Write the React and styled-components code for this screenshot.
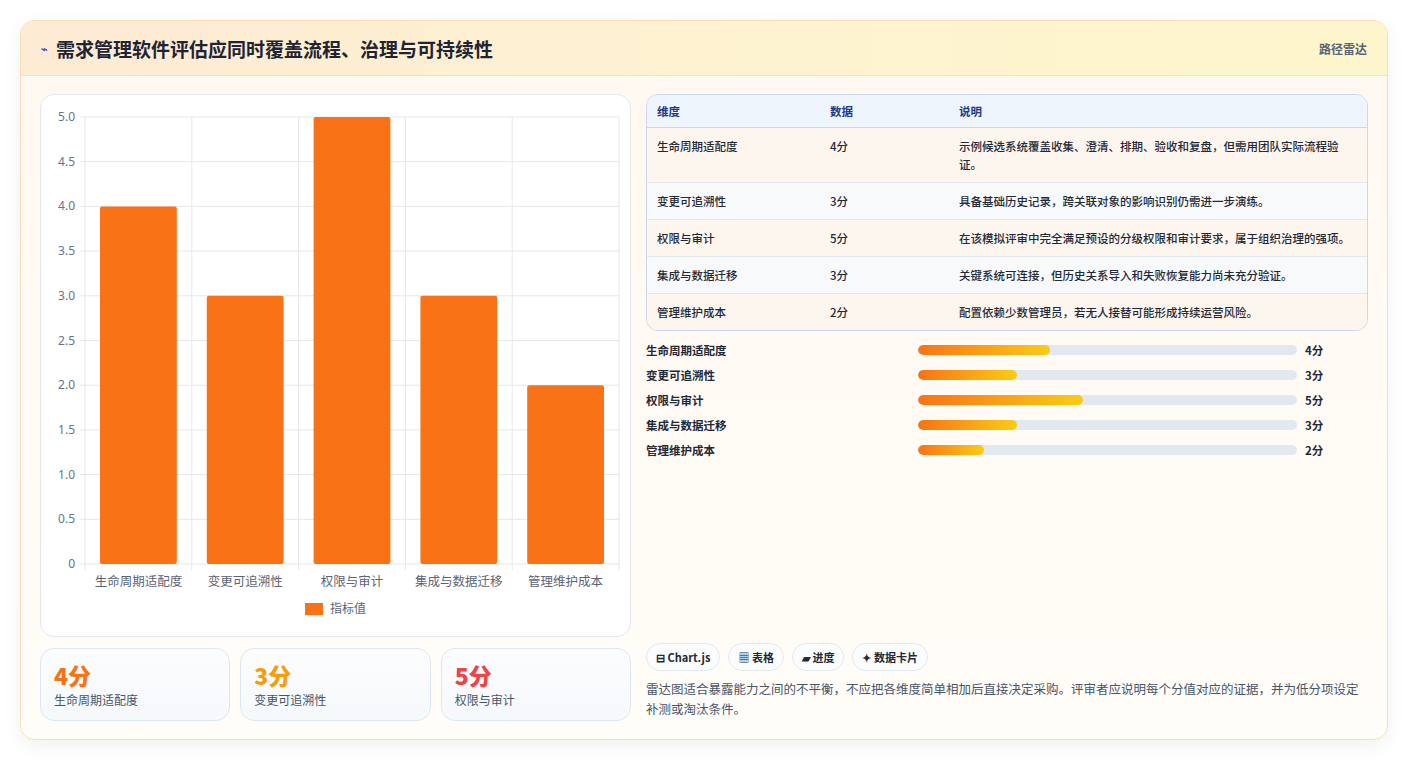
import React from "react";
import styled, { createGlobalStyle } from "styled-components";

const Global = createGlobalStyle`
  html,body{margin:0;padding:0;background:#fff;}
  body{font-family:"Noto Sans CJK SC","Noto Sans",sans-serif;color:#1f2937;}
`;
const Page = styled.div`padding:20px 20px;height:760px;box-sizing:border-box;`;
const Card = styled.div`
  border:1px solid #f7dfb8;border-radius:14px;overflow:hidden;height:720px;box-sizing:border-box;
  background:linear-gradient(180deg,#fff8f0,#fffdf8);box-shadow:0 6px 20px rgba(0,0,0,0.06);
  display:flex;flex-direction:column;
`;
const Header = styled.div`
  height:54px;display:flex;align-items:center;justify-content:space-between;padding:0 20px 0 20px;
  background:linear-gradient(90deg,#fdebd4,#fdf3d0 60%,#fdf6cc);border-bottom:1px solid #f3e4c8;
`;
const Title = styled.h1`margin:0;font-size:19px;font-weight:700;color:#1f2433;display:flex;align-items:center;gap:8px;`;
const Icon = styled.span`font-size:11px;color:#4f46e5;`;
const Tag = styled.span`font-size:12px;color:#5b6475;font-weight:600;`;
const Body = styled.div`flex:1;display:grid;grid-template-columns:591px 1fr;gap:15px;padding:18px 19px 18px 19px;`;
const Left = styled.div`display:flex;flex-direction:column;gap:11px;`;
const ChartBox = styled.div`height:543px;background:#fff;border:1px solid #e3e8ef;border-radius:14px;box-sizing:border-box;`;
const Stats = styled.div`display:grid;grid-template-columns:repeat(3,1fr);gap:10px;`;
const Stat = styled.div`height:73px;box-sizing:border-box;border:1px solid #dde7f3;border-radius:14px;background:linear-gradient(180deg,#fbfcfe,#f6f9fc);padding:12px 13px;`;
const StatVal = styled.div`font-size:23px;font-weight:800;color:${p=>p.c};line-height:28px;`;
const StatLbl = styled.div`font-size:12px;color:#475569;margin-top:2px;`;
const Right = styled.div`display:flex;flex-direction:column;`;
const Table = styled.table`width:100%;border-collapse:separate;border-spacing:0;border:1px solid #c9d7ea;border-radius:12px;overflow:hidden;font-size:11.5px;`;
const Th = styled.th`text-align:left;font-weight:700;color:#1e3a8a;background:#eef5fd;height:32px;padding:0 10px;border-bottom:1px solid #c9d7ea;`;
const Td = styled.td`vertical-align:top;padding:9px 10px;line-height:18px;color:#1f2937;font-weight:500;background:${p=>p.alt?"#f7f9fb":"#fdf6ee"};border-top:${p=>p.first?"none":"1px solid #e3e8ef"};`;
const Bars = styled.div`display:flex;flex-direction:column;gap:7px;margin-top:10px;`;
const BarRow = styled.div`display:grid;grid-template-columns:272px 379px 1fr;align-items:center;height:18px;font-size:11.5px;font-weight:600;`;
const Track = styled.div`height:10px;border-radius:5px;background:#e2e8f0;overflow:hidden;`;
const Fill = styled.div`height:100%;border-radius:5px;background:linear-gradient(90deg,#f97316,#facc15);`;
const Val = styled.span`padding-left:8px;font-weight:700;`;
const Spacer = styled.div`flex:1;`;
const Chips = styled.div`display:flex;gap:8px;`;
const Chip = styled.span`height:28px;box-sizing:border-box;padding:0 9px;border:1px solid #e3e8ef;border-radius:14px;background:#fbfcfd;font-size:11px;font-weight:600;display:flex;align-items:center;gap:3px;color:#1f2937;`;
const Note = styled.p`margin:8px 0 2px;font-size:12.5px;line-height:20px;color:#475569;`;

const data=[["生命周期适配度",4,"示例候选系统覆盖收集、澄清、排期、验收和复盘，但需用团队实际流程验证。",34.8],["变更可追溯性",3,"具备基础历史记录，跨关联对象的影响识别仍需进一步演练。",26.1],["权限与审计",5,"在该模拟评审中完全满足预设的分级权限和审计要求，属于组织治理的强项。",43.5],["集成与数据迁移",3,"关键系统可连接，但历史关系导入和失败恢复能力尚未充分验证。",26.1],["管理维护成本",2,"配置依赖少数管理员，若无人接替可能形成持续运营风险。",17.4]];

function Chart(){
  const x0=44,x1=578,y0=22,y1=469,cw=(x1-x0)/5,h=(y1-y0)/10;
  const ticks=[];for(let i=0;i<=10;i++)ticks.push(i);
  return <svg width="591" height="543" style={{display:"block"}}>
    {ticks.map(i=>{const y=y1-i*h;return <g key={i}><line x1={x0-5} x2={x1} y1={y} y2={y} stroke="#e5e7eb"/><text x={x0-10} y={y+4} fontSize="12" fill="#64748b" textAnchor="end" fontFamily="Noto Sans">{i===0?"0":(i/2).toFixed(1)}</text></g>})}
    {[0,1,2,3,4,5].map(i=><line key={i} x1={x0+i*cw} x2={x0+i*cw} y1={y0} y2={y1+6} stroke="#e5e7eb"/>)}
    {data.map((d,i)=>{const bh=d[1]*2*h;return <g key={i}><rect x={x0+i*cw+15} y={y1-bh} width={cw-30} height={bh} rx="2" fill="#f97316"/><text x={x0+i*cw+cw/2} y={y1+22} fontSize="12.5" fill="#5b6475" textAnchor="middle" fontFamily="Noto Sans CJK SC">{d[0]}</text></g>})}
    <rect x="264" y="508" width="18" height="12" fill="#f97316"/>
    <text x="289" y="518" fontSize="12" fill="#5b6475" fontFamily="Noto Sans CJK SC">指标值</text>
  </svg>;
}

export default function App(){
  return <Page><Global/><Card>
    <Header><Title><Icon>⌁</Icon>需求管理软件评估应同时覆盖流程、治理与可持续性</Title><Tag>路径雷达</Tag></Header>
    <Body>
      <Left>
        <ChartBox><Chart/></ChartBox>
        <Stats>
          <Stat><StatVal c="#f97316">4分</StatVal><StatLbl>生命周期适配度</StatLbl></Stat>
          <Stat><StatVal c="#f59e0b">3分</StatVal><StatLbl>变更可追溯性</StatLbl></Stat>
          <Stat><StatVal c="#ef4444">5分</StatVal><StatLbl>权限与审计</StatLbl></Stat>
        </Stats>
      </Left>
      <Right>
        <Table><thead><tr><Th style={{width:153}}>维度</Th><Th style={{width:109}}>数据</Th><Th>说明</Th></tr></thead>
          <tbody>{data.map((d,i)=><tr key={i}><Td alt={i%2} first={i===0}>{d[0]}</Td><Td alt={i%2} first={i===0}>{d[1]}分</Td><Td alt={i%2} first={i===0}>{d[2]}</Td></tr>)}</tbody>
        </Table>
        <Bars>{data.map((d,i)=><BarRow key={i}><span>{d[0]}</span><Track><Fill style={{width:d[3]+"%"}}/></Track><Val>{d[1]}分</Val></BarRow>)}</Bars>
        <Spacer/>
        <Chips><Chip>⊟ Chart.js</Chip><Chip>▦ 表格</Chip><Chip>▰ 进度</Chip><Chip>✦ 数据卡片</Chip></Chips>
        <Note>雷达图适合暴露能力之间的不平衡，不应把各维度简单相加后直接决定采购。评审者应说明每个分值对应的证据，并为低分项设定补测或淘汰条件。</Note>
      </Right>
    </Body>
  </Card></Page>;
}
